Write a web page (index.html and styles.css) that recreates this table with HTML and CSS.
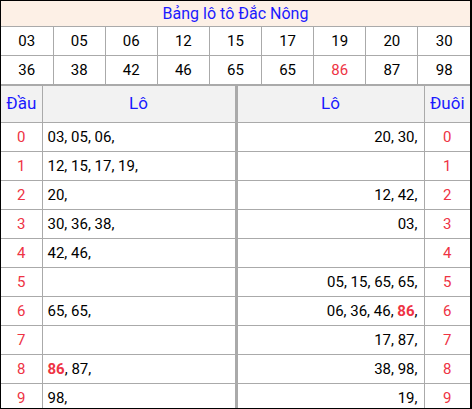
FILE: index.html
```html
<!DOCTYPE html>
<html lang="vi">
<head>
<meta charset="utf-8">
<title>Bảng lô tô Đắc Nông</title>
<link rel="stylesheet" href="styles.css">
</head>
<body>
<div class="frame">
  <table class="nums">
    <tr><td class="title" colspan="9">Bảng lô tô Đắc Nông</td></tr>
    <tr><td>03</td><td>05</td><td>06</td><td>12</td><td>15</td><td>17</td><td>19</td><td>20</td><td>30</td></tr>
    <tr><td>36</td><td>38</td><td>42</td><td>46</td><td>65</td><td>65</td><td class="hot">86</td><td>87</td><td>98</td></tr>
  </table>
  <table class="loto">
    <colgroup><col class="c-dau"><col class="c-lo1"><col class="c-lo2"><col class="c-duoi"></colgroup>
    <tr class="head"><th>Đầu</th><th class="split">Lô</th><th>Lô</th><th>Đuôi</th></tr>
    <tr><td class="d">0</td><td class="l split">03, 05, 06,</td><td class="r">20, 30,</td><td class="d">0</td></tr>
    <tr><td class="d">1</td><td class="l split">12, 15, 17, 19,</td><td class="r"></td><td class="d">1</td></tr>
    <tr><td class="d">2</td><td class="l split">20,</td><td class="r">12, 42,</td><td class="d">2</td></tr>
    <tr><td class="d">3</td><td class="l split">30, 36, 38,</td><td class="r">03,</td><td class="d">3</td></tr>
    <tr><td class="d">4</td><td class="l split">42, 46,</td><td class="r"></td><td class="d">4</td></tr>
    <tr><td class="d">5</td><td class="l split"></td><td class="r">05, 15, 65, 65,</td><td class="d">5</td></tr>
    <tr><td class="d">6</td><td class="l split">65, 65,</td><td class="r">06, 36, 46, <b class="hot">86</b>,</td><td class="d">6</td></tr>
    <tr><td class="d">7</td><td class="l split"></td><td class="r">17, 87,</td><td class="d">7</td></tr>
    <tr><td class="d">8</td><td class="l split"><b class="hot">86</b>, 87,</td><td class="r">38, 98,</td><td class="d">8</td></tr>
    <tr class="last"><td class="d">9</td><td class="l split">98,</td><td class="r">19,</td><td class="d">9</td></tr>
  </table>
</div>
</body>
</html>
```
FILE: styles.css
```css
html, body {
  margin: 0;
  padding: 0;
  background: #fff;
}
body {
  font-family: Roboto, "Liberation Sans", sans-serif;
  color: #000;
}
.frame {
  width: 469px;
  height: 407px;
  border-top: 1px solid #000;
  border-left: 1px solid #000;
  border-right: 2px solid #000;
  border-bottom: 1px solid #000;
  overflow: hidden;
}
table {
  border-collapse: collapse;
  width: 100%;
  table-layout: fixed;
}
.nums td {
  border: 1px solid #aaa;
  height: 28px;
  padding: 0;
  text-align: center;
  font-size: 15px;
}
.nums tr td:first-child { border-left: none; }
.nums tr td:last-child { border-right: none; }
.nums td.title {
  border-top: none;
  height: 25px;
  background: #fdf0e6;
  color: #1a1aff;
  font-size: 16px;
}
.hot {
  color: #ee3344;
}
b.hot { font-weight: bold; }
.loto {
  border-top: 1px solid #aaa;
}
.c-dau { width: 41px; }
.c-lo1 { width: 194px; }
.c-lo2 { width: 188px; }
.c-duoi { width: 46px; }
.loto th, .loto td {
  border: 1px solid #aaa;
  padding: 0;
}
.loto tr th:first-child, .loto tr td:first-child { border-left: none; }
.loto tr th:last-child, .loto tr td:last-child { border-right: none; }
.loto .split { border-right: 3px solid #aaa; }
.loto th {
  height: 34px;
  background: #f2f2f2;
  color: #1a1aff;
  font-weight: normal;
  font-size: 17px;
  text-align: center;
  vertical-align: middle;
  padding-bottom: 2px;
}
.loto td {
  height: 28px;
  font-size: 15px;
  white-space: nowrap;
}
.loto td.d {
  text-align: center;
  color: #ee3344;
}
.loto td.l {
  text-align: left;
  padding-left: 5px;
}
.loto td.r {
  text-align: right;
  padding-right: 6px;
}
.loto tr.last td { border-bottom: none; }
```
